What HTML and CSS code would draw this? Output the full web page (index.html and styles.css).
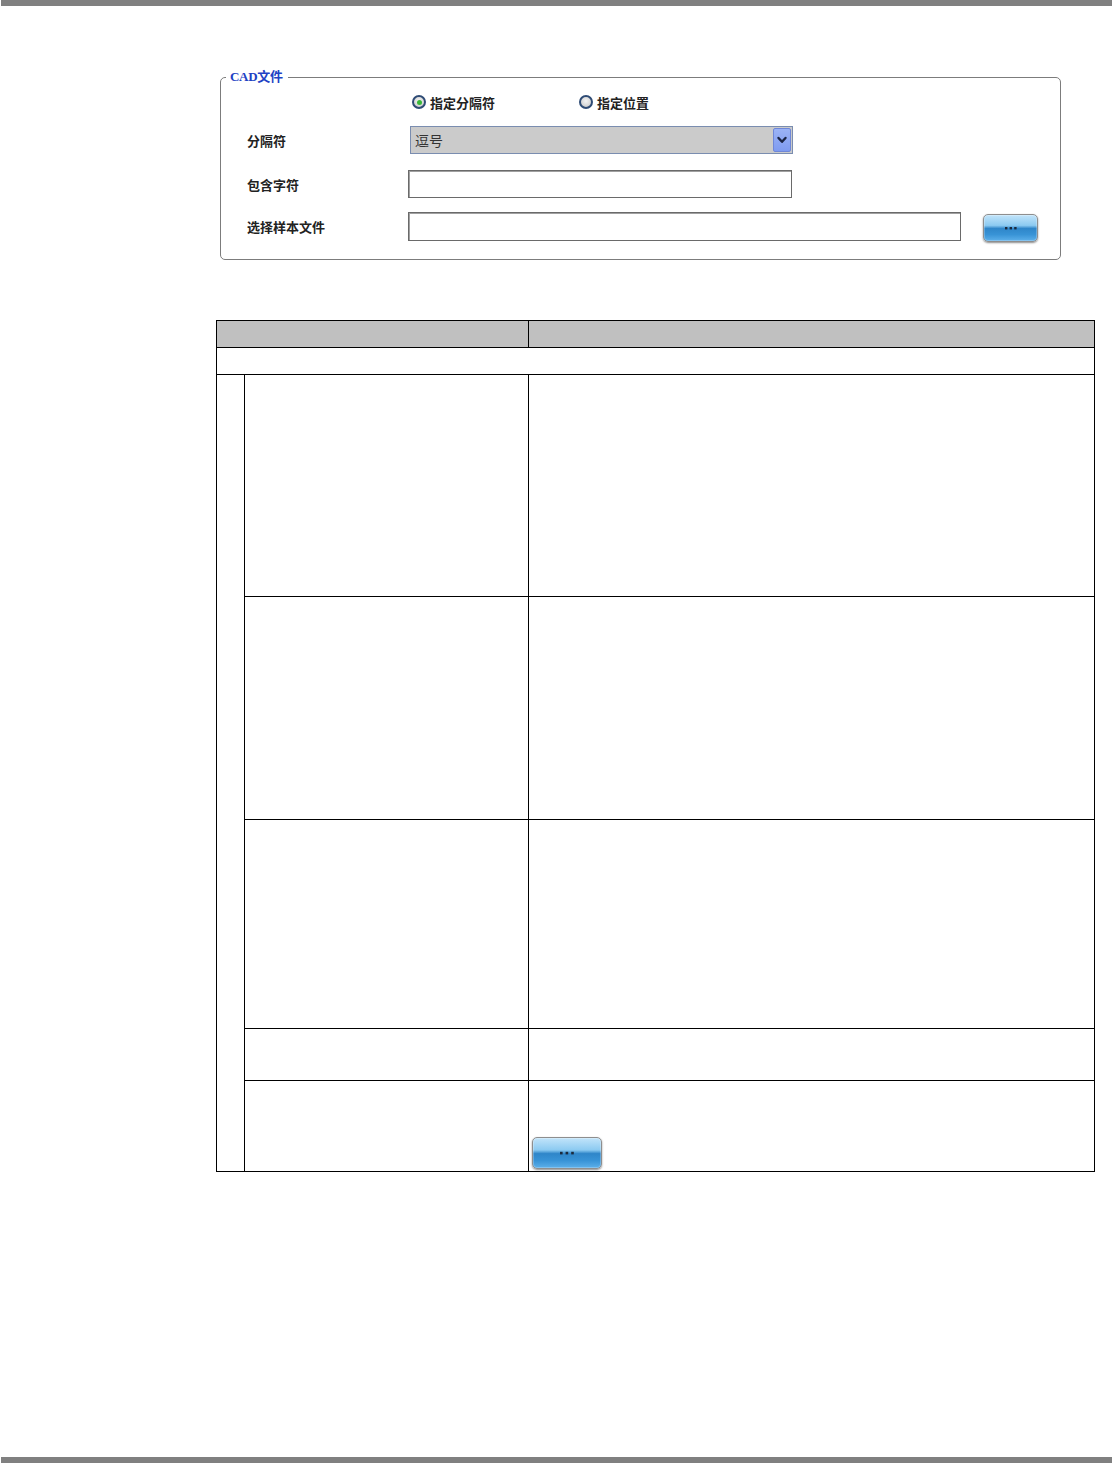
FILE: index.html
```html
<!DOCTYPE html>
<html lang="zh-CN">
<head>
	<meta charset="UTF-8">
	<title>CAD文件</title>
	<link rel="stylesheet" href="styles.css">
</head>
<body>
	<div class="page">
		<div class="topbar"></div>
		<div class="content">
			<fieldset class="cad-box">
				<legend>CAD文件</legend>
				<div class="row radios">
					<span class="lbl"></span>
					<label class="opt opt-first"><span class="radio on"></span>指定分隔符</label>
					<label class="opt"><span class="radio"></span>指定位置</label>
				</div>
				<div class="row sel-row">
					<span class="lbl">分隔符</span>
					<div class="select">
						<span class="sel-text">逗号</span>
						<span class="sel-arrow">
							<svg width="12" height="12" viewBox="0 0 12 12"><polyline points="2.5,4 6,7.8 9.5,4" fill="none" stroke="#1b2545" stroke-width="2.4" stroke-linecap="round" stroke-linejoin="round"/></svg>
						</span>
					</div>
				</div>
				<div class="row inp-row">
					<span class="lbl">包含字符</span>
					<div class="inp inp-short"></div>
				</div>
				<div class="row file-row">
					<span class="lbl">选择样本文件</span>
					<div class="inp inp-long"></div>
					<div class="btn btn-small">
						<svg width="12" height="4" viewBox="0 0 12 4"><rect x="0" y="1" width="2.4" height="2.4" fill="#1b2a3c"/><rect x="4.6" y="1" width="2.4" height="2.4" fill="#1b2a3c"/><rect x="9.2" y="1" width="2.4" height="2.4" fill="#1b2a3c"/></svg>
					</div>
				</div>
			</fieldset>

			<div class="tbl">
				<div class="thead">
					<div class="cell c1 head"></div>
					<div class="cell c2 head"></div>
				</div>
				<div class="cell span-row"></div>
				<div class="tbody">
					<div class="indent"></div>
					<div class="inner">
						<div class="trow h1"><div class="cell ic1"></div><div class="cell c2"></div></div>
						<div class="trow h2"><div class="cell ic1"></div><div class="cell c2"></div></div>
						<div class="trow h3"><div class="cell ic1"></div><div class="cell c2"></div></div>
						<div class="trow h4"><div class="cell ic1"></div><div class="cell c2"></div></div>
						<div class="trow h5">
							<div class="cell ic1"></div>
							<div class="cell c2 btn-cell">
								<div class="btn btn-big">
									<svg width="14" height="4" viewBox="0 0 14 4"><rect x="0" y="0.8" width="2.6" height="2.6" fill="#1b2a3c"/><rect x="5.6" y="0.8" width="2.6" height="2.6" fill="#1b2a3c"/><rect x="11.2" y="0.8" width="2.6" height="2.6" fill="#1b2a3c"/></svg>
								</div>
							</div>
						</div>
					</div>
				</div>
			</div>
		</div>
		<div class="botbar"></div>
	</div>
</body>
</html>
```

FILE: styles.css
```css
*{
	margin: 0;
	padding: 0;
	box-sizing: border-box;
}
body{
	background: #fff;
	font-family: "Noto Sans CJK SC", "Liberation Sans", sans-serif;
	color: #222;
}
.page{
	height: 1463px;
	display: flex;
	flex-direction: column;
}
.topbar, .botbar{
	height: 6px;
	margin-left: 1px;
	background: #808080;
}
.content{
	flex: 1;
	padding-top: 63px;
}

/* CAD box */
.cad-box{
	margin-left: 220px;
	width: 841px;
	border: 1px solid #7c7c7c;
	border-radius: 5px;
	padding: 0 0 18px 26px;
}
.cad-box legend{
	margin-left: -21px;
	padding: 0 5px 0 4px;
	height: 16px;
	line-height: 16px;
	font-size: 13px;
	font-weight: bold;
	color: #2141c4;
	font-family: "Liberation Serif", "Noto Sans CJK SC", serif;
	letter-spacing: -0.3px;
}
.row{
	display: flex;
	align-items: center;
}
.lbl{
	width: 161px;
	flex: none;
	font-size: 13px;
	font-weight: bold;
	color: #222;
}
.radios{
	height: 18px;
	margin-top: 8px;
}
.opt{
	display: flex;
	align-items: center;
	font-size: 13px;
	font-weight: bold;
	color: #222;
}
.opt-first{
	width: 167px;
	margin-left: 4px;
}
.radio{
	width: 14px;
	height: 14px;
	border-radius: 50%;
	border: 2px solid #2e4b75;
	background: radial-gradient(circle at 50% 40%, #f4f4f4, #c4c4c4);
	margin-right: 4px;
	display: flex;
	align-items: center;
	justify-content: center;
}
.radio.on::after{
	content: "";
	width: 5px;
	height: 5px;
	border-radius: 50%;
	background: #38b838;
}
.sel-row{
	height: 28px;
	margin-top: 15px;
}
.select{
	margin-left: 2px;
	width: 383px;
	height: 28px;
	background: #cbcbcb;
	border: 1px solid #7a8db0;
	display: flex;
	align-items: center;
	justify-content: space-between;
	padding: 0 1px 0 4px;
}
.sel-text{
	font-size: 14px;
	color: #333;
}
.sel-arrow{
	width: 18px;
	height: 24px;
	border: 1px solid #6f87d8;
	border-radius: 2px;
	background: linear-gradient(#9bb3f6, #7f9bf0);
	display: flex;
	align-items: center;
	justify-content: center;
}
.inp{
	height: 28px;
	background: #fff;
	border: 1px solid #6a6a6a;
	box-shadow: inset 1px 1px 0 #a0a0a0;
}
.inp-row{
	height: 28px;
	margin-top: 16px;
}
.inp-short{
	width: 384px;
}
.file-row{
	height: 29px;
	margin-top: 14px;
}
.inp-long{
	width: 553px;
	height: 29px;
}
.btn{
	border: 1px solid #8e8e8e;
	border-radius: 5px;
	background: linear-gradient(#c2e4fa 0%, #8ccaf1 40%, #2f86c9 52%, #3893d6 75%, #5db0ea 100%);
	box-shadow: 0 1px 2px rgba(0,0,0,0.45), inset 0 0 0 1px rgba(255,255,255,0.25);
	display: flex;
	align-items: center;
	justify-content: center;
}
.btn-small{
	width: 55px;
	height: 28px;
	margin-left: 22px;
	align-self: flex-start;
	margin-top: 2px;
}

/* table */
.tbl{
	margin: 60px 0 0 216px;
	width: 879px;
	border-top: 1px solid #000;
	border-left: 1px solid #000;
}
.cell{
	border-right: 1px solid #000;
	border-bottom: 1px solid #000;
}
.thead{
	display: flex;
	height: 27px;
}
.head{
	background: #c0c0c0;
}
.c1{
	width: 312px;
}
.c2{
	width: 566px;
}
.span-row{
	height: 27px;
}
.tbody{
	display: flex;
}
.indent{
	width: 28px;
	border-right: 1px solid #000;
	border-bottom: 1px solid #000;
}
.inner{
	display: flex;
	flex-direction: column;
}
.trow{
	display: flex;
}
.ic1{
	width: 284px;
}
.h1{ height: 222px; }
.h2{ height: 223px; }
.h3{ height: 209px; }
.h4{ height: 52px; }
.h5{ height: 91px; }
.btn-cell{
	display: flex;
	align-items: flex-end;
	padding: 0 0 2px 3px;
}
.btn-big{
	width: 70px;
	height: 32px;
}
```
